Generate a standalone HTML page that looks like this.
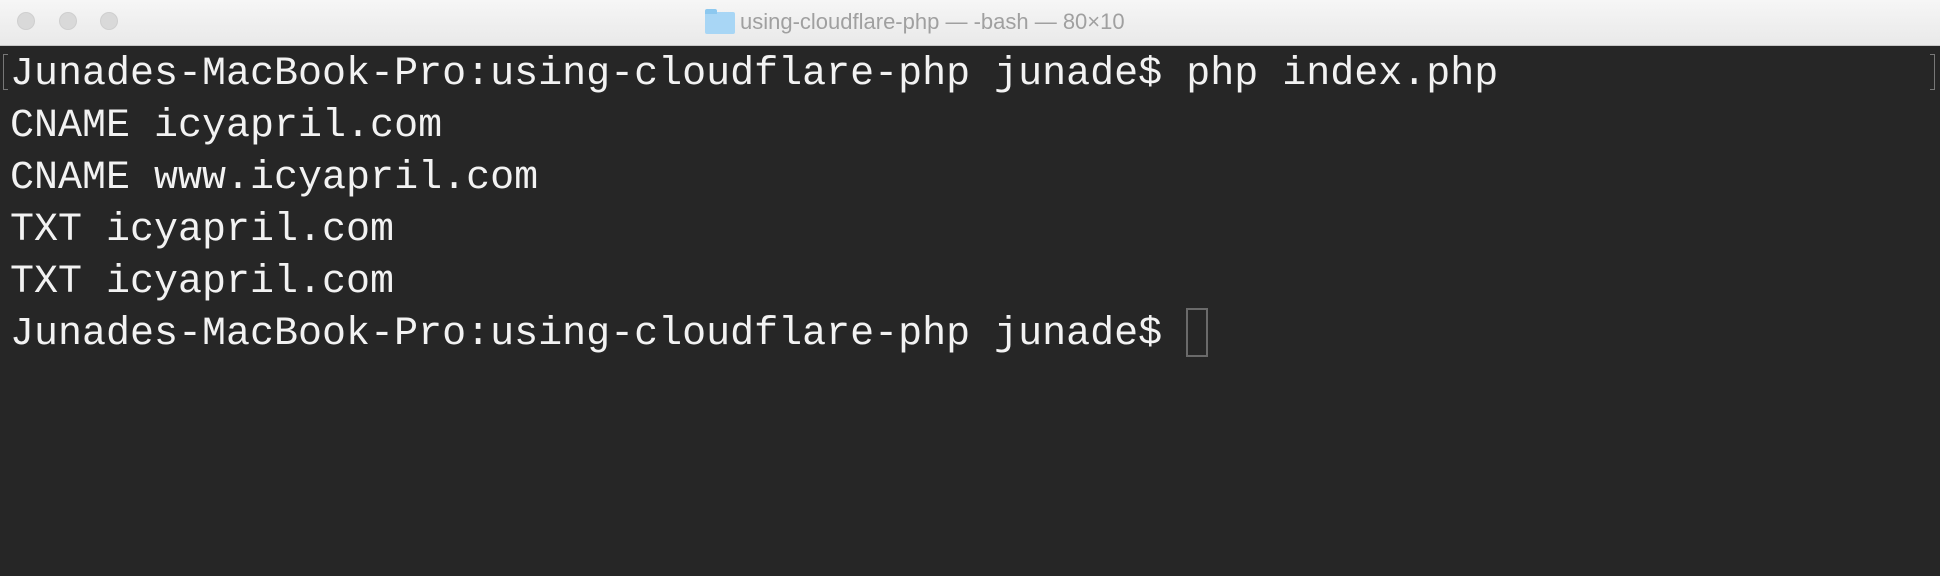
<!DOCTYPE html>
<html><head><style>
body{margin:0;width:1940px;height:576px;overflow:hidden;background:#262626;position:relative}
.tb{position:absolute;left:0;top:0;width:1940px;height:45px;background:linear-gradient(#f6f6f6,#e9e9e9);border-bottom:1px solid #c8c8c8}
.d{position:absolute;top:12px;width:18px;height:18px;border-radius:50%;background:#d9d9d9;border:1px solid #cfcfcf;box-sizing:border-box}
.title{position:absolute;top:9px;left:740px;font:22px "Liberation Sans",sans-serif;color:#a0a0a0;white-space:nowrap}
.fold{position:absolute;left:705px;top:12px;width:30px;height:22px;background:#a8d6f5;border-radius:2px}
.fold:before{content:"";position:absolute;left:0;top:-3px;width:12px;height:5px;background:#8cc8ef;border-radius:2px 2px 0 0}
pre{position:absolute;left:10px;top:49px;margin:0;font:40px/52px "Liberation Mono",monospace;color:#f2f2f2}
.cur{position:absolute;left:1186px;top:308px;width:22px;height:49px;border:2px solid #6a6a6a;box-sizing:border-box}
.br{position:absolute;top:54px;width:5px;height:36px;border:1px solid #777;box-sizing:border-box}
</style></head><body>
<div class="tb">
<div class="d" style="left:17px"></div><div class="d" style="left:59px"></div><div class="d" style="left:100px"></div>
<div class="fold"></div>
<div class="title">using-cloudflare-php — -bash — 80×10</div>
</div>
<div class="br" style="left:3px;border-right:none"></div>
<div class="br" style="left:1930px;border-left:none"></div>
<pre>Junades-MacBook-Pro:using-cloudflare-php junade$ php index.php
CNAME icyapril.com
CNAME www.icyapril.com
TXT icyapril.com
TXT icyapril.com
Junades-MacBook-Pro:using-cloudflare-php junade$ </pre>
<div class="cur"></div>
</body></html>
